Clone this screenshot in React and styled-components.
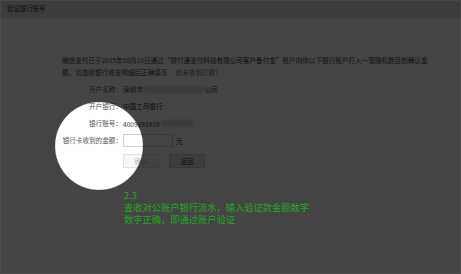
import React from "react";
import styled, { createGlobalStyle } from "styled-components";

const Global = createGlobalStyle`
  html, body { margin: 0; padding: 0; background: #ffffff; }
  body { font-family: "Noto Sans CJK SC", "Noto Sans", sans-serif; }
`;

const Page = styled.div`
  position: relative;
  width: 461px;
  height: 274px;
  overflow: hidden;
  background: #ffffff;
  color: #4a4a4a;
  font-size: 6.6px;
`;

const Header = styled.div`
  height: 18px;
  display: flex;
  align-items: center;
  padding: 0 7px;
  background: #e2e2e2;
  border-bottom: 1px solid #d6d6d6;
  box-sizing: border-box;
`;

const Title = styled.span`
  font-size: 6.4px;
  color: #333;
`;

const Body = styled.div`
  padding: 37px 0 0 62px;
`;

const Notice = styled.p`
  margin: 0;
  line-height: 11.5px;
  width: 380px;
  color: #444;
`;

const Link = styled.a`
  color: #576b95;
  margin-left: 8px;
  text-decoration: none;
`;

const Form = styled.div`
  margin-top: 4.5px;
  display: grid;
  grid-template-columns: 60px auto;
  column-gap: 1px;
  row-gap: 4.3px;
  align-items: center;
`;

const Label = styled.span`
  text-align: right;
  line-height: 13px;
  white-space: nowrap;
  color: #555;
`;

const Value = styled.div`
  display: flex;
  align-items: center;
  height: 13px;
  color: #333;
  white-space: nowrap;
`;

const Masked = styled.span`
  display: inline-block;
  width: ${(p) => p.$w}px;
  height: 7px;
  background: #d9d9d9;
  filter: blur(1.5px);
  border-radius: 3px;
`;

const Input = styled.input`
  width: 50px;
  height: 13px;
  box-sizing: border-box;
  border: 1px solid #cfcfcf;
  background: #fff;
  padding: 0;
  margin: 0 3px 0 0;
  outline: none;
`;

const Buttons = styled.div`
  grid-column: 2;
  display: flex;
  gap: 10px;
  margin-top: 2.7px;
`;

const Button = styled.button`
  width: 36px;
  height: 14px;
  box-sizing: border-box;
  padding: 0;
  font-family: inherit;
  font-size: 6.6px;
  border: 1px solid ${(p) => (p.$disabled ? "#e2e2e2" : "#cccccc")};
  background: ${(p) => (p.$disabled ? "#f7f7f7" : "#e6e6e6")};
  color: ${(p) => (p.$disabled ? "#bdbdbd" : "#333")};
`;

const Spotlight = styled.div`
  position: absolute;
  inset: 0;
  background: radial-gradient(
    circle 44px at 99px 146px,
    rgba(0, 0, 0, 0) 43.3px,
    rgba(0, 0, 0, 0.733) 44.5px
  );
  box-shadow: inset 0 0 0 1px rgba(255, 255, 255, 0.06);
  padding: 189px 0 0 124px;
  box-sizing: border-box;
`;

const Annotation = styled.div`
  display: flex;
  flex-direction: column;
  color: #25a825;
  font-size: 9.25px;
`;

const AnnotationLine = styled.div`
  height: 12.2px;
  line-height: 12.2px;
  white-space: nowrap;
`;

export default function App() {
  return (
    <>
      <Global />
      <Page>
        <Header>
          <Title>验证银行账号</Title>
        </Header>
        <Body>
          <Notice>
            微信支付已于2015年08月10日通过“财付通支付科技有限公司客户备付金”账户向你以下银行账户打入一笔随机数目的确认金
            <br />
            额，请查阅银行收支明细后正确填写
            <Link>尚未收到打款？</Link>
          </Notice>
          <Form>
            <Label>开户名称：</Label>
            <Value>
              深圳市<Masked $w={62} />公司
            </Value>
            <Label>开户银行：</Label>
            <Value>中国工商银行</Value>
            <Label>银行账号：</Label>
            <Value>
              4009091919<Masked $w={34} />
            </Value>
            <Label>银行卡收到的金额：</Label>
            <Value>
              <Input />元
            </Value>
            <Buttons>
              <Button $disabled>确认</Button>
              <Button>返回</Button>
            </Buttons>
          </Form>
        </Body>
        <Spotlight>
          <Annotation>
            <AnnotationLine>2.3</AnnotationLine>
            <AnnotationLine>查收对公账户银行流水，输入验证款金额数字</AnnotationLine>
            <AnnotationLine>数字正确，即通过账户验证</AnnotationLine>
          </Annotation>
        </Spotlight>
      </Page>
    </>
  );
}
